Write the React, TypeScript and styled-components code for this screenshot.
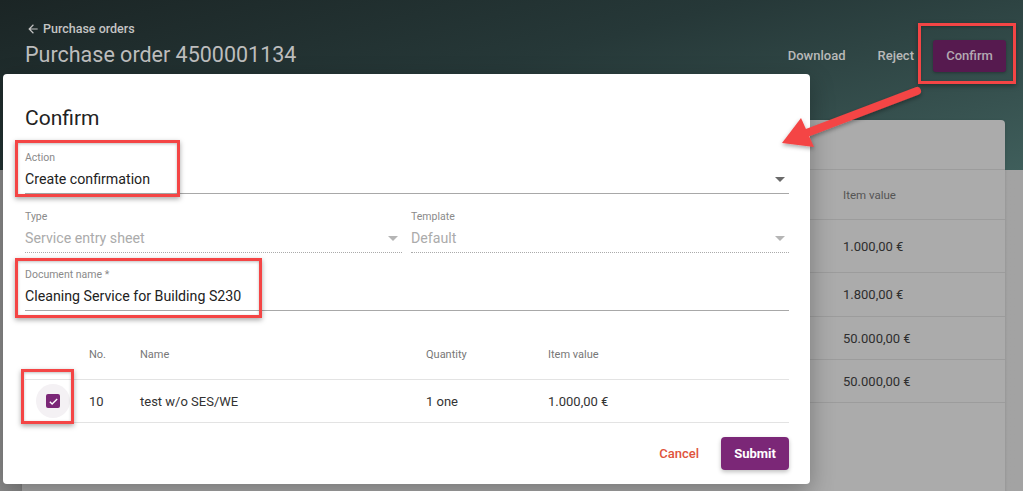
import React from "react";
import styled, {createGlobalStyle} from "styled-components";

const GlobalStyle = createGlobalStyle`
    html, body {
        margin: 0;
        padding: 0;
    }
    body {
        font-family: Roboto, "Liberation Sans", sans-serif;
        background: #9a9a9a;
    }
`;

const cardRows = [
    {value: "", height: 50, header: true},
    {value: "Item value", height: 50, header: true},
    {value: "1.000,00 €", height: 53},
    {value: "1.800,00 €", height: 44},
    {value: "50.000,00 €", height: 43},
    {value: "50.000,00 €", height: 43},
];

const lines = [
    {no: "10", name: "test w/o SES/WE", quantity: "1 one", value: "1.000,00 €"},
];

const Caret = ({disabled}: {disabled?: boolean}) => (
    <svg width="10" height="5" viewBox="0 0 10 5">
        <path d="M0 0h10L5 5z" fill={disabled ? "#b5b5b5" : "#6a6a6a"}/>
    </svg>
);

const App = () => {
    return <>
        <GlobalStyle/>
        <Page>
            <Header>
                <BackLink>
                    <svg width="14" height="14" viewBox="0 0 24 24">
                        <path d="M20 11H7.83l5.59-5.59L12 4l-8 8 8 8 1.41-1.41L7.83 13H20v-2z" fill="#c4c4c4"/>
                    </svg>
                    Purchase orders
                </BackLink>
                <TitleRow>
                    <PageTitle>Purchase order 4500001134</PageTitle>
                    <Actions>
                        <TextAction>Download</TextAction>
                        <TextAction>Reject</TextAction>
                        <HeaderConfirm>Confirm</HeaderConfirm>
                    </Actions>
                </TitleRow>
            </Header>
            <Card>
                {cardRows.map((row, i) => (
                    <CardRow key={i} $height={row.height}>
                        <span/>
                        <CardCell $header={!!row.header}>{row.value}</CardCell>
                    </CardRow>
                ))}
            </Card>

            <Dialog>
                <DialogTitle>Confirm</DialogTitle>
                <Field>
                    <Label>Action</Label>
                    <ValueRow>
                        <Value>Create confirmation</Value>
                        <Caret/>
                    </ValueRow>
                </Field>
                <FieldPair>
                    <Field $dotted>
                        <Label>Type</Label>
                        <ValueRow>
                            <Value $disabled>Service entry sheet</Value>
                            <Caret disabled/>
                        </ValueRow>
                    </Field>
                    <Field $dotted>
                        <Label>Template</Label>
                        <ValueRow>
                            <Value $disabled>Default</Value>
                            <Caret disabled/>
                        </ValueRow>
                    </Field>
                </FieldPair>
                <Field>
                    <Label>Document name *</Label>
                    <ValueRow>
                        <Value>Cleaning Service for Building S230</Value>
                    </ValueRow>
                </Field>
                <Table>
                    <TableHead>
                        <span/>
                        <span>No.</span>
                        <span>Name</span>
                        <span>Quantity</span>
                        <span>Item value</span>
                    </TableHead>
                    {lines.map(line => (
                        <TableRow key={line.no}>
                            <CheckCell>
                                <Halo>
                                    <CheckBox>
                                        <svg width="11" height="11" viewBox="0 0 24 24">
                                            <path d="M4 12.5l5 5L20 6.5" stroke="#fff" strokeWidth="3" fill="none"/>
                                        </svg>
                                    </CheckBox>
                                </Halo>
                            </CheckCell>
                            <span>{line.no}</span>
                            <span>{line.name}</span>
                            <span>{line.quantity}</span>
                            <span>{line.value}</span>
                        </TableRow>
                    ))}
                </Table>
                <Footer>
                    <CancelButton>Cancel</CancelButton>
                    <SubmitButton>Submit</SubmitButton>
                </Footer>
            </Dialog>

            <Highlight $left={918} $top={23} $width={98} $height={61}/>
            <Highlight $left={15} $top={140} $width={165} $height={57}/>
            <Highlight $left={15} $top={258} $width={247} $height={60}/>
            <Highlight $left={21} $top={369} $width={53} $height={55}/>
            <ArrowLayer width="1023" height="491" viewBox="0 0 1023 491">
                <defs>
                    <filter id="arrowShadow" x="-20%" y="-20%" width="140%" height="140%">
                        <feDropShadow dx="0" dy="2" stdDeviation="2" floodColor="#000" floodOpacity="0.35"/>
                    </filter>
                </defs>
                <g filter="url(#arrowShadow)">
                    <line x1="917" y1="91" x2="804" y2="134" stroke="#f44545" strokeWidth="8" strokeLinecap="round"/>
                    <polygon points="782,143 801,118 814,147" fill="#f44545"/>
                </g>
            </ArrowLayer>
        </Page>
    </>;
};

export default App;

const Page = styled.div`
    position: relative;
    width: 1023px;
    height: 491px;
    overflow: hidden;
    background: linear-gradient(90deg, #8c8c8c 0%, #a0a0a0 30%, #a3a3a3 100%);
`;

const Header = styled.div`
    height: 170px;
    box-sizing: border-box;
    padding: 21px 17px 0 25px;
    background: linear-gradient(165deg, #1b2525 0%, #263838 45%, #3f5e5b 100%);
`;

const BackLink = styled.div`
    display: flex;
    align-items: center;
    gap: 3px;
    margin-left: 1px;
    font-size: 12.5px;
    font-weight: 500;
    color: #c4c4c4;
    line-height: 16px;
`;

const TitleRow = styled.div`
    display: flex;
    align-items: center;
    justify-content: space-between;
    margin-top: 1px;
`;

const PageTitle = styled.div`
    font-size: 21.5px;
    color: #bdbdbd;
    line-height: 34px;
`;

const Actions = styled.div`
    display: flex;
    align-items: center;
    margin-top: 1px;
`;

const TextAction = styled.div`
    font-size: 13px;
    font-weight: 500;
    color: #b9b9b9;
    padding: 0 16px;
    line-height: 32px;
`;

const HeaderConfirm = styled.div`
    margin-left: 3px;
    width: 73px;
    height: 32px;
    display: flex;
    align-items: center;
    justify-content: center;
    border-radius: 3px;
    background: #561a4f;
    color: #b3a9b2;
    font-size: 13px;
    font-weight: 500;
    box-shadow: 0 1px 3px rgba(0, 0, 0, 0.3);
`;

const Card = styled.div`
    margin: -50px 18px 0 22px;
    background: #ababab;
    border-radius: 4px 4px 0 0;
    height: 400px;
    box-shadow: 0 1px 3px rgba(0, 0, 0, 0.15);
`;

const CardRow = styled.div<{ $height: number }>`
    display: grid;
    grid-template-columns: 1fr 162px;
    align-items: center;
    box-sizing: border-box;
    height: ${p => p.$height}px;
    border-bottom: 1px solid #9c9c9c;
`;

const CardCell = styled.span<{ $header: boolean }>`
    font-size: ${p => p.$header ? "11.5px" : "13px"};
    color: ${p => p.$header ? "#555" : "#2e2e2e"};
`;

const Dialog = styled.div`
    position: absolute;
    left: 3px;
    top: 74px;
    width: 807px;
    height: 410px;
    box-sizing: border-box;
    padding: 30px 21px 14px 22px;
    background: #fff;
    border-radius: 4px;
    box-shadow: 0 8px 24px rgba(0, 0, 0, 0.3);
    display: flex;
    flex-direction: column;
`;

const DialogTitle = styled.div`
    font-size: 21px;
    line-height: 28px;
    color: #222;
    margin-bottom: 19px;
`;

const Field = styled.div<{ $dotted?: boolean }>`
    display: flex;
    flex-direction: column;
    border-bottom: 1px ${p => p.$dotted ? "dotted #aaa" : "solid #a8a8a8"};
    margin-bottom: 16px;
    padding-bottom: 4px;
`;

const FieldPair = styled.div`
    display: grid;
    grid-template-columns: 377px 1fr;
    gap: 9px;
    & > ${Field} {
        margin-bottom: 15px;
    }
`;

const Label = styled.div`
    font-size: 10.5px;
    line-height: 14px;
    color: #8a8a8a;
    margin-bottom: 4px;
`;

const ValueRow = styled.div`
    display: flex;
    align-items: center;
    justify-content: space-between;
    padding-right: 4px;
`;

const Value = styled.div<{ $disabled?: boolean }>`
    font-size: 14.2px;
    line-height: 20px;
    color: ${p => p.$disabled ? "#ababab" : "#222"};
`;

const Table = styled.div`
    margin-top: 2px;
    display: flex;
    flex-direction: column;
`;

const columns = "64px 51px 286px 122px 1fr";

const TableHead = styled.div`
    display: grid;
    grid-template-columns: ${columns};
    align-items: center;
    height: 50px;
    border-bottom: 1px solid #e3e3e3;
    font-size: 11px;
    color: #777;
`;

const TableRow = styled.div`
    display: grid;
    grid-template-columns: ${columns};
    align-items: center;
    height: 42px;
    border-bottom: 1px solid #e3e3e3;
    font-size: 13px;
    color: #333;
`;

const CheckCell = styled.div`
    display: flex;
    padding-left: 11px;
`;

const Halo = styled.div`
    width: 34px;
    height: 34px;
    border-radius: 50%;
    background: #f4f1f4;
    display: flex;
    align-items: center;
    justify-content: center;
`;

const CheckBox = styled.div`
    width: 14px;
    height: 14px;
    border-radius: 2px;
    background: #7b2777;
    display: flex;
    align-items: center;
    justify-content: center;
`;

const Footer = styled.div`
    margin-top: auto;
    display: flex;
    justify-content: flex-end;
    align-items: center;
    gap: 22px;
`;

const CancelButton = styled.div`
    font-size: 13px;
    font-weight: 500;
    color: #e0533c;
`;

const SubmitButton = styled.div`
    width: 68px;
    height: 33px;
    display: flex;
    align-items: center;
    justify-content: center;
    border-radius: 4px;
    background: #7b2777;
    color: #fff;
    font-size: 13px;
    font-weight: 700;
    box-shadow: 0 2px 4px rgba(0, 0, 0, 0.25);
`;

const Highlight = styled.div<{ $left: number; $top: number; $width: number; $height: number }>`
    position: absolute;
    left: ${p => p.$left}px;
    top: ${p => p.$top}px;
    width: ${p => p.$width}px;
    height: ${p => p.$height}px;
    box-sizing: border-box;
    border: 3px solid #f44545;
    box-shadow: 0 2px 5px rgba(0, 0, 0, 0.35), inset 0 1px 3px rgba(0, 0, 0, 0.25);
    pointer-events: none;
`;

const ArrowLayer = styled.svg`
    position: absolute;
    left: 0;
    top: 0;
    pointer-events: none;
`;
